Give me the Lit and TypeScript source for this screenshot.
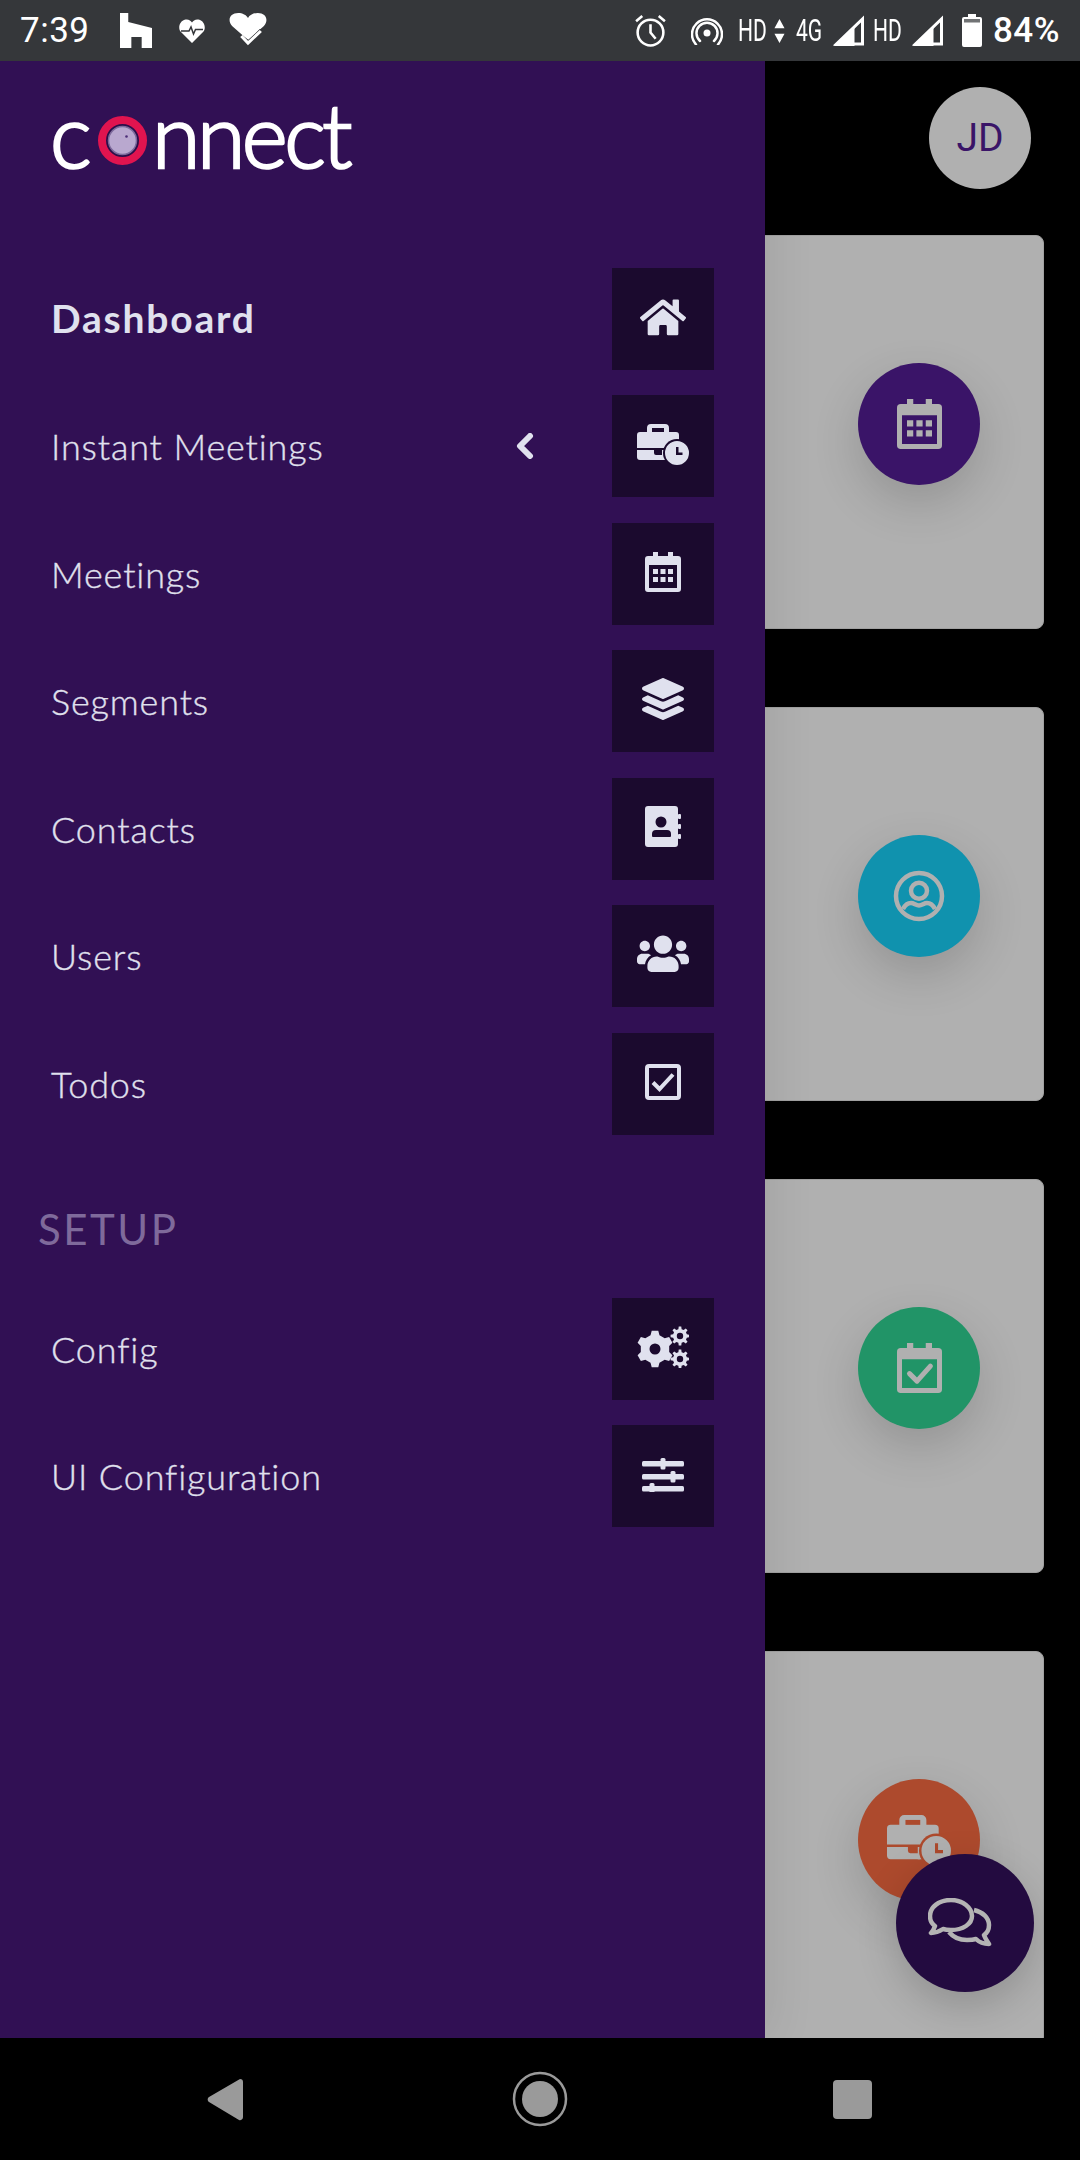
import {LitElement, html, svg, css} from 'lit';
import {customElement} from 'lit/decorators.js';

// Cog outline with a hole in the middle, teeth are computed so all three cogs share it.
const gearPath = (cx: number, cy: number, outer: number, inner: number, hole: number, teeth: number) => {
  const pts: string[] = [];
  const step = (Math.PI * 2) / teeth;
  for (let i = 0; i < teeth; i++) {
    const a = i * step - Math.PI / 2;
    const corners: [number, number][] = [
      [a - step * 0.3, inner],
      [a - step * 0.17, outer],
      [a + step * 0.17, outer],
      [a + step * 0.3, inner],
    ];
    corners.forEach(([t, r]) => pts.push(`${(cx + Math.cos(t) * r).toFixed(2)} ${(cy + Math.sin(t) * r).toFixed(2)}`));
  }
  return `M${pts.join('L')}Z M${cx - hole} ${cy}a${hole} ${hole} 0 1 0 ${hole * 2} 0a${hole} ${hole} 0 1 0 ${-hole * 2} 0Z`;
};

const home = (w = 46) => html`<svg width=${w} viewBox="0 0 576 512" fill="currentColor"><path d="M280.37 148.26L96 300.11V464a16 16 0 0 0 16 16l112.06-.29a16 16 0 0 0 15.92-16V368a16 16 0 0 1 16-16h64a16 16 0 0 1 16 16v95.64a16 16 0 0 0 16 16.05L464 480a16 16 0 0 0 16-16V300L295.67 148.26a12.19 12.19 0 0 0-15.3 0zM571.6 251.47L488 182.56V44.05a12 12 0 0 0-12-12h-56a12 12 0 0 0-12 12v72.61L318.47 43a48 48 0 0 0-61 0L4.34 251.47a12 12 0 0 0-1.6 16.9l25.5 31A12 12 0 0 0 45.15 301l235.22-193.74a12.19 12.19 0 0 1 15.3 0L530.9 301a12 12 0 0 0 16.9-1.6l25.5-31a12 12 0 0 0-1.7-16.93z"/></svg>`;

const briefcase = (w = 52) => html`<svg width=${w} viewBox="0 0 52 41" fill="currentColor">
  <mask id="case-cut"><rect width="52" height="41" fill="#fff"/><circle cx="40" cy="29" r="14" fill="#000"/><rect x="15" y="4" width="12" height="4" fill="#000"/></mask>
  <g mask="url(#case-cut)">
    <path d="M10 8V4a4 4 0 0 1 4-4h14a4 4 0 0 1 4 4v4h7a3 3 0 0 1 3 3v13H0V11a3 3 0 0 1 3-3z"/>
    <path d="M0 26h17v3a2 2 0 0 0 2 2h8v5H3a3 3 0 0 1-3-3z"/>
    <rect x="25" y="26" width="17" height="10"/>
  </g>
  <path fill-rule="evenodd" d="M40 17a12 12 0 1 1 0 24 12 12 0 0 1 0-24zM39 23v8h6.500v-2.500H41.500V23z"/>
</svg>`;

const calendar = (w = 36) => html`<svg width=${w} viewBox="0 0 36 40" fill="currentColor"><path fill-rule="evenodd" d="M8 0h5v4h10V0h5v4h5a3 3 0 0 1 3 3v30a3 3 0 0 1-3 3H3a3 3 0 0 1-3-3V7a3 3 0 0 1 3-3h5zM4 13v23h28V13zM8 17h5v5H8zM15.500 17h5v5h-5zM23 17h5v5h-5zM8 25h5v5H8zM15.500 25h5v5h-5zM23 25h5v5h-5z"/></svg>`;

const calendarCheck = (w = 45) => html`<svg width=${w} viewBox="0 0 36 40" fill="currentColor"><path fill-rule="evenodd" d="M8 0h5v4h10V0h5v4h5a3 3 0 0 1 3 3v30a3 3 0 0 1-3 3H3a3 3 0 0 1-3-3V7a3 3 0 0 1 3-3h5zM4 13v23h28V13z"/><path d="M10 24.500l6 6 10.700-12" fill="none" stroke="currentColor" stroke-width="4" stroke-linecap="round" stroke-linejoin="round"/></svg>`;

const layers = () => html`<svg width="42" viewBox="0 0 512 512" fill="currentColor"><path d="M12.41 148.02l232.94 105.67c6.8 3.09 14.49 3.09 21.29 0l232.94-105.67c16.55-7.51 16.55-32.52 0-40.03L266.65 2.31a25.607 25.607 0 0 0-21.29 0L12.41 107.98c-16.55 7.51-16.55 32.53 0 40.04zm487.18 88.28l-58.09-26.33-161.64 73.27c-7.56 3.43-15.59 5.17-23.86 5.17s-16.29-1.74-23.86-5.17L70.51 209.97l-58.1 26.33c-16.55 7.5-16.55 32.5 0 40l232.94 105.59c6.8 3.08 14.49 3.08 21.29 0L499.59 276.3c16.55-7.5 16.55-32.5 0-40zm0 127.8l-57.87-26.23-161.86 73.37c-7.56 3.43-15.59 5.17-23.86 5.17s-16.29-1.74-23.86-5.17L70.29 337.87 12.41 364.1c-16.55 7.5-16.55 32.5 0 40l232.94 105.59c6.8 3.08 14.49 3.08 21.29 0L499.59 404.1c16.55-7.5 16.55-32.5 0-40z"/></svg>`;

const addressBook = () => html`<svg width="36" viewBox="0 0 36 41" fill="currentColor"><path fill-rule="evenodd" d="M3 0h27a3 3 0 0 1 3 3v35a3 3 0 0 1-3 3H3a3 3 0 0 1-3-3V3a3 3 0 0 1 3-3zM16 10.500a5.500 5.500 0 1 0 0 11 5.500 5.500 0 0 0 0-11zM11 24a4 4 0 0 0-4 4v2a1 1 0 0 0 1 1h17a1 1 0 0 0 1-1v-2a4 4 0 0 0-4-4z"/><rect x="33" y="8" width="3" height="5" rx="1"/><rect x="33" y="18" width="3" height="5" rx="1"/><rect x="33" y="28" width="3" height="5" rx="1"/></svg>`;

const users = () => html`<svg width="52" viewBox="0 0 640 512" fill="currentColor"><path d="M96 224c35.3 0 64-28.7 64-64s-28.7-64-64-64-64 28.7-64 64 28.7 64 64 64zm448 0c35.3 0 64-28.7 64-64s-28.7-64-64-64-64 28.7-64 64 28.7 64 64 64zm32 32h-64c-17.6 0-33.5 7.1-45.1 18.6 40.3 22.1 68.9 62 75.1 109.4h66c17.7 0 32-14.3 32-32v-32c0-35.3-28.7-64-64-64zm-256 0c61.9 0 112-50.1 112-112S381.9 32 320 32 208 82.1 208 144s50.1 112 112 112zm76.8 32h-8.3c-20.8 10-43.900 16-68.500 16s-47.600-6-68.500-16h-8.300C179.600 288 128 339.600 128 403.200V432c0 26.500 21.500 48 48 48h288c26.500 0 48-21.500 48-48v-28.800c0-63.600-51.600-115.200-115.200-115.200zm-223.700-13.400C161.500 263.100 145.600 256 128 256H64c-35.300 0-64 28.700-64 64v32c0 17.700 14.300 32 32 32h65.900c6.300-47.400 34.900-87.300 75.200-109.400z"/></svg>`;

const checkSquare = () => html`<svg width="36" viewBox="0 0 36 36" fill="none" stroke="currentColor" stroke-width="4"><rect x="2" y="2" width="32" height="32" rx="2"/><path d="M8 18.500l6.500 6.500L28 10.500"/></svg>`;

const cogs = () => html`<svg width="52" viewBox="0 0 52 42" fill="currentColor" fill-rule="evenodd">
  <path d=${gearPath(18, 23, 18.500, 14.500, 5.500, 6)}/>
  <path d=${gearPath(43, 10, 9.500, 7, 3.200, 8)}/>
  <path d=${gearPath(43, 33, 9.500, 7, 3.200, 8)}/>
</svg>`;

const sliders = () => html`<svg width="42" viewBox="0 0 42 36" fill="currentColor">
  ${[[5, 21], [18, 31], [30, 10]].map(([y, x]) => svg`<rect x="0" y=${y} width="42" height="5.500" rx="1.500"/><rect x=${x - 2.5} y=${y - 3} width="5" height="11.500" rx="1.500"/>`)}
</svg>`;

const userCircle = () => html`<svg width="52" viewBox="0 0 52 52" fill="none" stroke="currentColor" stroke-width="4.500"><circle cx="26" cy="26" r="23"/><circle cx="26" cy="20.700" r="8"/><path d="M10 39c2-4 5-6 8-6 3 0 5 2.500 8 2.500s5-2.500 8-2.500c3 0 6 2 8 6"/></svg>`;

const comments = () => html`<svg class="fab__icon" width="64" viewBox="0 0 64 50" fill="none" stroke="currentColor" stroke-width="4.500" stroke-linejoin="round"><path d="M23 2C11 2 2 9 2 18c0 4 2 8 5 10-1 3-2 5-4 7 5 0 9-2 12-4 3 1 5 1 8 1 12 0 21-6 21-14S35 2 23 2z"/><path d="M46 12c9 2 15 8 15 15 0 4-2 8-5 10 1 3 3 6 5 9-5 0-10-2-13-5-3 1-6 1-9 1-8 0-14-3-18-8"/></svg>`;

const menu = [
  {label: 'Dashboard', icon: home(), active: true},
  {label: 'Instant Meetings', icon: briefcase(), chevron: true},
  {label: 'Meetings', icon: calendar()},
  {label: 'Segments', icon: layers()},
  {label: 'Contacts', icon: addressBook()},
  {label: 'Users', icon: users()},
  {label: 'Todos', icon: checkSquare()},
];
const setup = [
  {label: 'Config', icon: cogs()},
  {label: 'UI Configuration', icon: sliders()},
];
const cards = [
  {color: '#3a1468', icon: calendar(45)},
  {color: '#1092ae', icon: userCircle()},
  {color: '#219467', icon: calendarCheck()},
  {color: '#ad4a2d', icon: briefcase(64)},
];

@customElement('app-root')
export class AppRoot extends LitElement {
  static styles = css`
    :host {
      display: flex;
      flex-direction: column;
      width: 1080px;
      height: 2160px;
      overflow: hidden;
      background: #000;
      font-family: Lato, "Noto Sans", sans-serif;
    }
    svg {
      display: block;
      flex: none;
    }

    .status {
      flex: none;
      height: 61px;
      display: flex;
      align-items: center;
      padding-left: 20px;
      background: #35373a;
      color: #fff;
      font-family: Roboto, sans-serif;
    }
    .status__time {
      font-size: 35px;
      width: 100px;
      letter-spacing: 0.5px;
    }
    .status__gap-heart { margin-left: 27px; }
    .status__gap-check { margin-left: 24px; }
    .status__gap-alarm { margin-left: auto; }
    .status__gap-radio { margin-left: 24px; }
    .status__gap-hd { margin-left: 15px; }
    .status__gap-arrows { margin-left: 7px; }
    .status__gap-sig { margin-left: 6px; }
    .status__gap-sig2 { margin-left: 10px; }
    .status__gap-bat { margin-left: 18px; }
    .status__narrow {
      display: inline-block;
      width: 29px;
      font-size: 31px;
      line-height: 1;
      white-space: nowrap;
      transform: scaleX(0.68);
      transform-origin: left center;
    }
    .status__gap-4g { margin-left: 11px; width: 31px; }
    .status__gap-hd2 { margin-left: 8px; }
    .status__pct {
      margin-left: 11px;
      margin-right: 20px;
      font-size: 35px;
      font-weight: 500;
      letter-spacing: 0.5px;
    }

    .main {
      position: relative;
      flex: 1;
      min-height: 0;
      overflow: hidden;
      background: #000;
    }
    .content {
      display: flex;
      flex-direction: column;
      align-items: flex-end;
      gap: 78px;
      padding: 174px 36px 0 0;
    }
    .avatar {
      position: absolute;
      top: 26px;
      right: 49px;
      width: 102px;
      height: 102px;
      border-radius: 50%;
      background: #b0b0b0;
      color: #3a1468;
      font-family: Roboto, sans-serif;
      font-size: 39px;
      display: flex;
      align-items: center;
      justify-content: center;
    }
    .card {
      flex: none;
      box-sizing: border-box;
      width: 900px;
      height: 394px;
      display: flex;
      justify-content: flex-end;
      padding: 127px 63px 0 0;
      background: #b0b0b0;
      border: 1px solid #a0a0a0;
      border-radius: 8px;
    }
    .card__circle {
      width: 122px;
      height: 122px;
      border-radius: 50%;
      display: flex;
      align-items: center;
      justify-content: center;
      color: #b0b0b0;
      box-shadow: 0 18px 48px rgba(0, 0, 0, 0.16);
    }
    .fab {
      position: absolute;
      left: 896px;
      top: 1793px;
      width: 138px;
      height: 138px;
      border-radius: 50%;
      background: #230b40;
      color: #b4b4b4;
      display: flex;
      align-items: center;
      justify-content: center;
      box-shadow: 0 14px 40px rgba(0, 0, 0, 0.18);
    }
    .fab__icon {
      margin-right: 10px;
    }

    .drawer {
      position: absolute;
      inset: 0 auto 0 0;
      width: 765px;
      box-sizing: border-box;
      background: #311054;
      box-shadow: 0 0 48px rgba(0, 0, 0, 0.1);
      color: #e0e1ee;
    }
    .logo {
      height: 207px;
      box-sizing: border-box;
      padding: 38px 0 0 50px;
      display: flex;
      align-items: flex-start;
      color: #fff;
      font-family: Lato, sans-serif;
      font-size: 88px;
      font-weight: 300;
      -webkit-text-stroke: 2.500px #fff;
      line-height: 70px;
      letter-spacing: -3.500px;
    }
    .logo__ball {
      margin: 17px 5px 0 10px;
    }
    .menu {
      display: flex;
      flex-direction: column;
      gap: 25.45px;
    }
    .row {
      display: flex;
      align-items: center;
      height: 102px;
      padding: 0 51px 0 51px;
    }
    .row__label {
      flex: 1;
      font-size: 36px;
      font-weight: 300;
      -webkit-text-stroke: 0.35px #e0e1ee;
      letter-spacing: 0.85px;
      line-height: 1;
    }
    .row--active .row__label {
      font-size: 39px;
      font-weight: 700;
      -webkit-text-stroke: 0;
      letter-spacing: 1.800px;
      margin-top: -2px;
    }
    .row__chevron {
      margin-right: 78px;
    }
    .row__tile {
      box-sizing: border-box;
      width: 102px;
      height: 102px;
      padding-bottom: 4px;
      background: #1b0a2e;
      display: flex;
      align-items: center;
      justify-content: center;
    }
    .section {
      margin: 0;
      height: 163.3px;
      padding: 26px 0 0 38px;
      box-sizing: border-box;
      display: flex;
      align-items: center;
      font-size: 42px;
      font-weight: 400;
      letter-spacing: 2.500px;
      color: #7f6a9b;
    }

    .nav {
      flex: none;
      height: 122px;
      background: #000;
    }
    .nav svg {
      width: 1080px;
      height: 122px;
    }
  `;

  private row(item: {label: string; icon: unknown; active?: boolean; chevron?: boolean}) {
    return html`
      <div class="row ${item.active ? 'row--active' : ''}">
        <span class="row__label">${item.label}</span>
        ${item.chevron
          ? html`<svg class="row__chevron" width="18" height="26" viewBox="0 0 18 26" fill="none" stroke="currentColor" stroke-width="6" stroke-linecap="round" stroke-linejoin="round"><path d="M14 3L4 13l10 10"/></svg>`
          : ''}
        <div class="row__tile">${item.icon}</div>
      </div>
    `;
  }

  private renderStatus() {
    return html`
      <div class="status">
        <span class="status__time">7:39</span>
        <svg width="32" height="35" viewBox="0 0 31 35" preserveAspectRatio="none" fill="#fff"><path d="M0 0h8v9l23 6v20H21V24H11v11H0z"/></svg>
        <svg class="status__gap-heart" width="26" height="24" viewBox="0 0 26 24"><path fill="#fff" d="M13 24L1.500 12.500C-1 9.500 0 2 6.500 0.500 9.500 0 12 1.500 13 3.500 14 1.500 16.500 0 19.500 0.500 26 2 27 9.500 24.500 12.500z"/><path d="M2 12h8l2-4 2.500 7 2-4.500h7.500" fill="none" stroke="#35373a" stroke-width="1.500"/></svg>
        <svg class="status__gap-check" width="38" height="35" viewBox="0 0 37 35" preserveAspectRatio="none"><path fill="#fff" d="M18.500 27L3 13C-2 7 1 0 9 0c4 0 8 2 9.500 5C20 2 24 0 28 0c8 0 11 7 6 13z"/><path d="M4 21l3 0 8 3 4 3 11-11 5 0-3 6-13 12z" fill="#35373a"/><path d="M12 23l6.500 7L31 18" fill="none" stroke="#fff" stroke-width="3"/></svg>

        <svg class="status__gap-alarm" width="33" height="35" viewBox="0 0 32 34" fill="none" stroke="#fff" stroke-width="2.500"><circle cx="16" cy="19" r="12.500"/><path d="M16 11v8l5 6M2 8l6-5M30 8l-6-5"/></svg>
        <svg class="status__gap-radio" width="32" height="28" viewBox="0 0 32 28" fill="none" stroke="#fff" stroke-width="2.500" stroke-linecap="round"><circle cx="16" cy="16" r="3.500" fill="#fff" stroke="none"/><path d="M9 24a10.500 10.500 0 1 1 14 0M5 27.500a15 15 0 1 1 22 0"/></svg>
        <span class="status__narrow status__gap-hd">HD</span>
        <svg class="status__gap-arrows" width="11" height="26" viewBox="0 0 12 26" fill="#fff"><path d="M6 0l5.500 10H.5zM6 26l5.500-10H.5z"/></svg>
        <span class="status__narrow status__gap-4g">4G</span>
        <svg class="status__gap-sig" width="32" height="31" viewBox="0 0 31 31"><path d="M29 4v25H3z" fill="none" stroke="#fff" stroke-width="3"/><path d="M21 11v20H0z" fill="#fff"/></svg>
        <span class="status__narrow status__gap-hd2">HD</span>
        <svg class="status__gap-sig2" width="32" height="31" viewBox="0 0 31 31"><path d="M29 4v25H3z" fill="none" stroke="#fff" stroke-width="3"/><path d="M21 11v20H0z" fill="#fff"/></svg>
        <svg class="status__gap-bat" width="20" height="33" viewBox="0 0 20 33"><path fill="#fff" d="M6 0h8v3h4a2 2 0 0 1 2 2v26a2 2 0 0 1-2 2H2a2 2 0 0 1-2-2V5a2 2 0 0 1 2-2h4z"/><rect x="2" y="5" width="16" height="3.500" fill="#35373a" opacity="0.7"/></svg>
        <span class="status__pct">84%</span>
      </div>
    `;
  }

  override render() {
    return html`
      ${this.renderStatus()}
      <div class="main">
        <div class="content">
          ${cards.map(card => html`
            <div class="card">
              <div class="card__circle" style="background:${card.color}">${card.icon}</div>
            </div>
          `)}
        </div>
        <div class="avatar">JD</div>
        <div class="fab">${comments()}</div>
        <div class="drawer">
          <div class="logo">
            <span>c</span>
            <svg class="logo__ball" width="49" height="49" viewBox="0 0 49 49">
              <circle cx="24.500" cy="24.500" r="20.500" fill="#2a0f4a" stroke="#e0144f" stroke-width="8"/>
              <circle cx="24.500" cy="24.500" r="14" fill="#b9a8cf" stroke="#7d6a9b" stroke-width="1.500"/>
              <circle cx="28.500" cy="20.500" r="1.300" fill="#4d2f78"/>
            </svg>
            <span>nnect</span>
          </div>
          <div class="menu">${menu.map(item => this.row(item))}</div>
          <h2 class="section">SETUP</h2>
          <div class="menu">${setup.map(item => this.row(item))}</div>
        </div>
      </div>
      <div class="nav">
        <svg viewBox="0 0 1080 122" fill="#9a9a9a">
          <path d="M240 41a3 3 0 0 1 3 3v35a3 3 0 0 1-4 3L209 64a3 3 0 0 1 0-5z"/>
          <circle cx="540" cy="61" r="26" fill="none" stroke="#9a9a9a" stroke-width="2.500"/>
          <circle cx="540" cy="61" r="18"/>
          <rect x="833" y="42" width="39" height="39" rx="4"/>
        </svg>
      </div>
    `;
  }
}
